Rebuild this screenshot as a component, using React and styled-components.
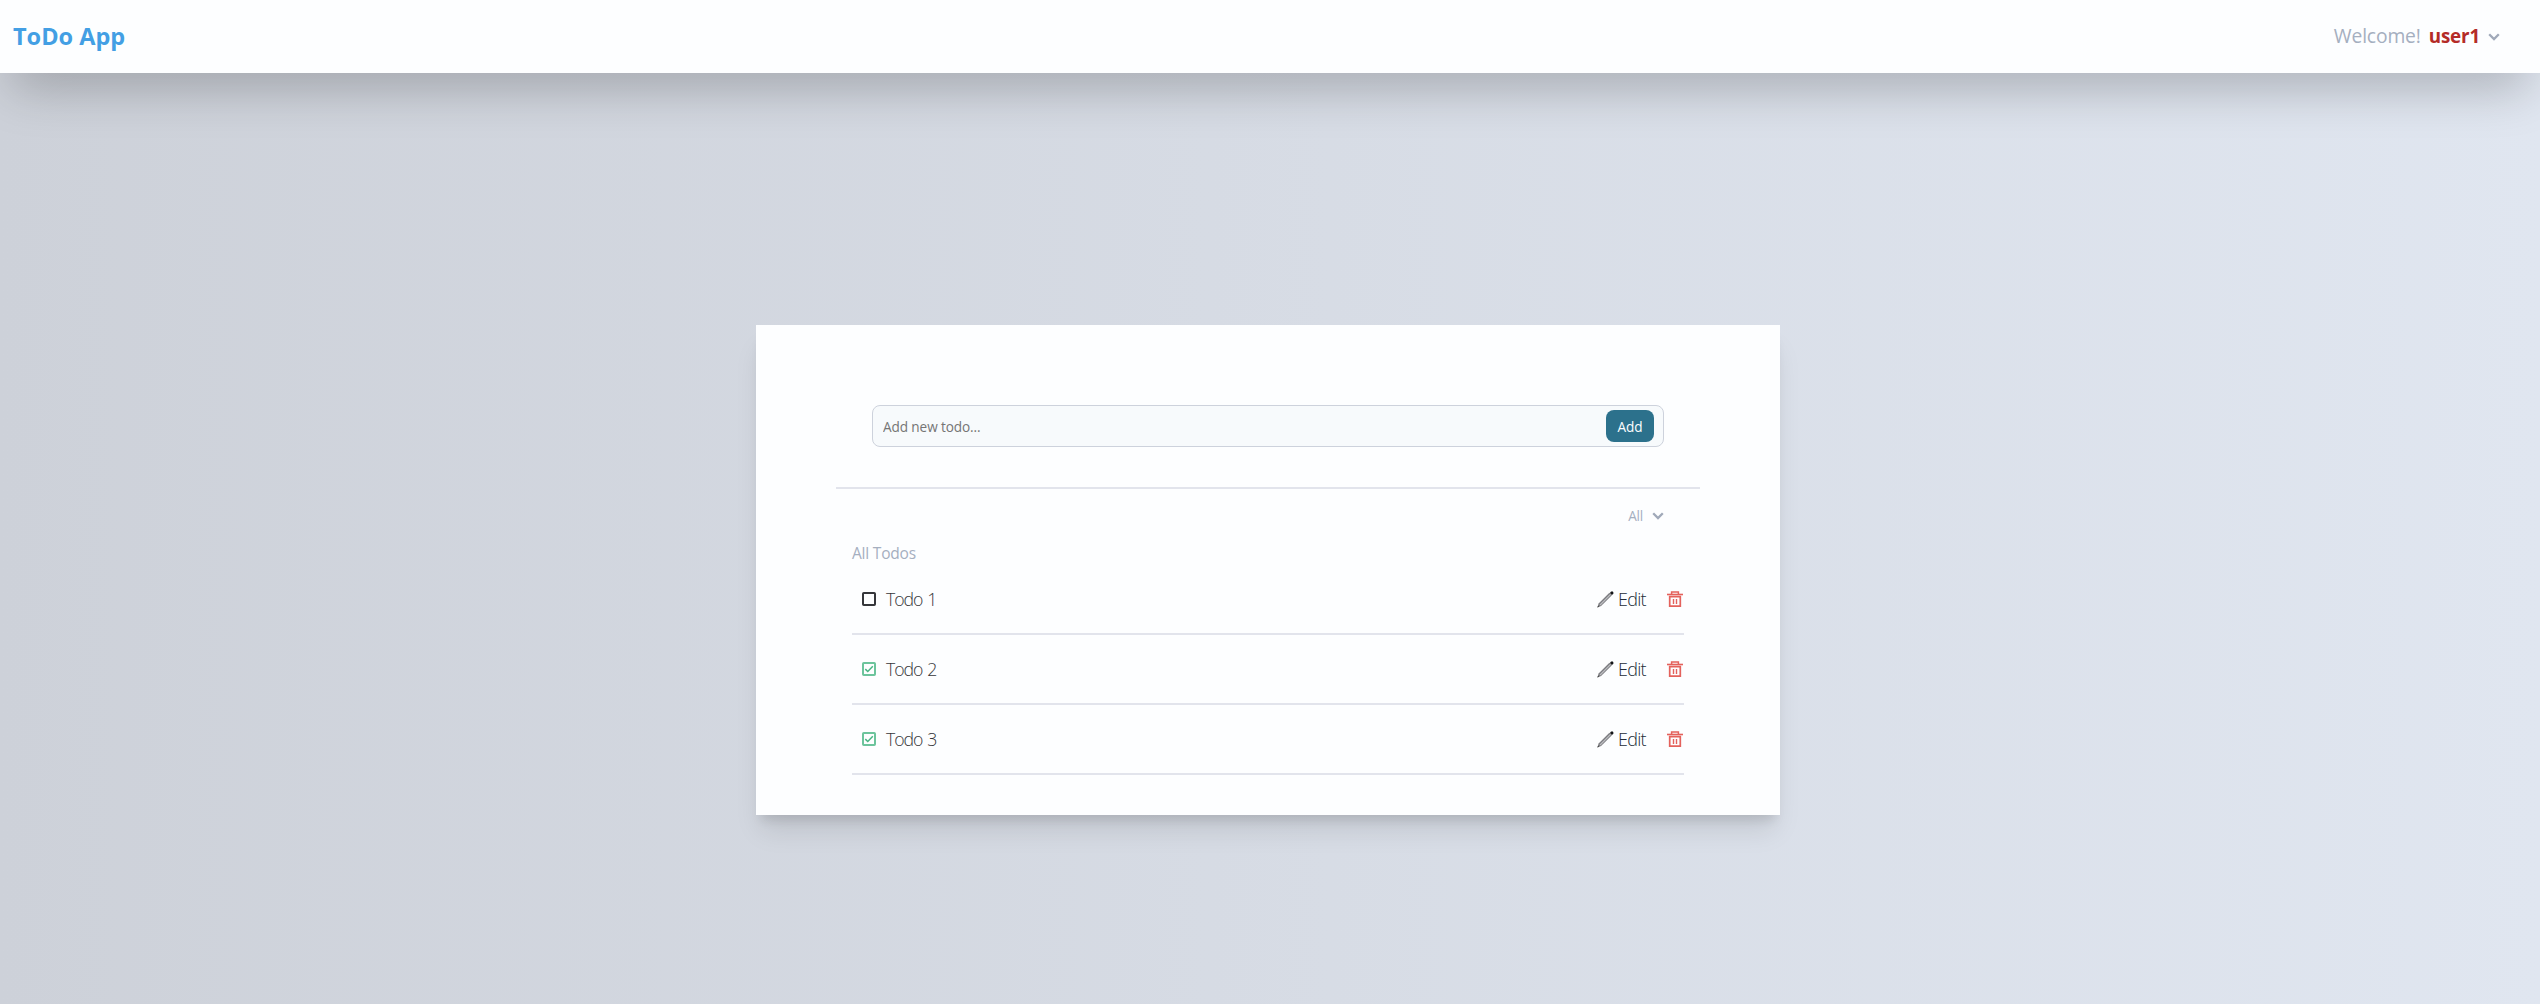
import React from "react";
import styled, { createGlobalStyle } from "styled-components";

const Global = createGlobalStyle`
  *, *::before, *::after { box-sizing: border-box; }
  body {
    margin: 0;
    font-family: "Segoe UI", "Open Sans", "Noto Sans", sans-serif;
    line-height: 1.5;
  }
  button, input { font-family: inherit; }
`;

const Page = styled.div`
  min-height: 100vh;
  display: flex;
  flex-direction: column;
  background: linear-gradient(to right, #cdd1d9, #e0e6f0);
`;

const Header = styled.header`
  height: 73px;
  display: flex;
  align-items: center;
  justify-content: space-between;
  padding: 0 40px 0 13px;
  background: #fdfeff;
  box-shadow: 0 25px 50px -12px rgba(0, 0, 0, 0.25);
`;

const Text = styled.span`
  display: inline-block;
  white-space: nowrap;
  font-size: ${(p) => p.$size}px;
  font-weight: ${(p) => p.$weight || 400};
  color: ${(p) => p.$color};
  letter-spacing: ${(p) => p.$track || 0}px;
  word-spacing: ${(p) => p.$word || 0}px;
`;

const UserMenu = styled.div`
  display: flex;
  align-items: center;
  gap: 8px;
`;

const Main = styled.main`
  flex: 1;
  display: flex;
  justify-content: center;
  align-items: flex-start;
  padding: 252px 4px 0 0;
`;

const Card = styled.section`
  width: 1024px;
  height: 490px;
  padding: 80px 80px 0;
  background: #fdfeff;
  box-shadow: 0 20px 25px -5px rgba(0, 0, 0, 0.1), 0 10px 10px -5px rgba(0, 0, 0, 0.1);
`;

const AddForm = styled.form`
  height: 42px;
  margin: 0 36px 40px;
  padding: 0 9px 0 10px;
  display: flex;
  align-items: center;
  border: 1px solid #cdd2dc;
  border-radius: 8px;
  background: #f7fafc;
`;

const AddInput = styled.input`
  flex: 1;
  padding: 0;
  border: 0;
  outline: 0;
  background: transparent;
  font-size: 13.6px;
  letter-spacing: -0.1px;
  &::placeholder { color: #757575; opacity: 1; }
`;

const AddButton = styled.button`
  width: 48px;
  height: 32px;
  padding: 0;
  border: 0;
  border-radius: 8px;
  background: #2c718c;
  color: #fdfeff;
  font-size: 13.6px;
`;

const Divider = styled.hr`
  height: 2px;
  margin: 0;
  border: 0;
  background: #e2e4ec;
`;

const Filter = styled.div`
  height: 54px;
  padding: 0 36px;
  display: flex;
  justify-content: flex-end;
  align-items: center;
  gap: 9px;
`;

const List = styled.div`
  padding: 0 16px;
`;

const ListTitle = styled.div`
  height: 22px;
  display: flex;
  align-items: center;
`;

const Row = styled.div`
  height: 70px;
  padding: 22px 1px 0 10px;
  display: flex;
  align-items: flex-start;
  border-bottom: 2px solid #e2e4ec;
`;

const RowLabel = styled.div`
  height: 24px;
  flex: 1;
  display: flex;
  align-items: center;
  gap: 10px;
`;

const Actions = styled.div`
  height: 24px;
  display: flex;
  align-items: center;
`;

const EditLink = styled.div`
  display: flex;
  align-items: center;
  gap: 4px;
  width: 70px;
`;

const Icon = styled.svg`
  display: block;
  flex: none;
`;

const Chevron = () => (
  <Icon width="12" height="8" viewBox="0 0 12 8" fill="none" stroke="#a0a9b9" strokeWidth="2.3">
    <path d="M1.2 1.3 6 6.1l4.8-4.8" />
  </Icon>
);

const Checkbox = ({ done }) => (
  <Icon width="14" height="14" viewBox="0 0 14 14" fill="none">
    <rect x="1" y="1" width="12" height="12" rx="0.8" stroke={done ? "#6cc49c" : "#35363a"} strokeWidth="2" />
    {done && <path d="M3.3 7.1 5.8 9.5l5-5.2" stroke="#48b583" strokeWidth="1.5" />}
  </Icon>
);

const Pencil = () => (
  <Icon width="17" height="17" viewBox="0 0 17 17">
    <path d="M0.4 16.4 1.6 12.6 12.4 1.8l2.5 2.5L4.1 15.1z" fill="#7d7e82" />
    <path d="M3 14 13.6 3.4" stroke="#bdbec1" strokeWidth="1.2" />
    <path d="m12.9 2 1.2-1.4h1.7l.6.8v1.4L14.9 4z" fill="#141518" />
    <path d="m.3 16.6.8-2 1.2 1.2z" fill="#444" />
  </Icon>
);

const Trash = () => (
  <Icon width="16" height="16" viewBox="0 0 16 16" fill="none" stroke="#e4625c">
    <path d="M0 3.5h16" strokeWidth="1.6" />
    <path d="M4.6 3V.9h6.8V3" strokeWidth="1.5" />
    <path d="M2.7 5.7h10.6v9.5H2.7z" strokeWidth="1.7" />
    <path d="M6.5 8v5M9.5 8v5" strokeWidth="1.4" />
  </Icon>
);

const todos = [
  { title: "Todo 1", done: false },
  { title: "Todo 2", done: true },
  { title: "Todo 3", done: true },
];

export default function App() {
  return (
    <Page>
      <Global />
      <Header>
        <Text $size={23.5} $weight={700} $color="#439fe4">ToDo App</Text>
        <UserMenu>
          <Text $size={19.3} $color="#a5afbf" $track={-0.15}>Welcome!</Text>
          <Text $size={18.8} $weight={700} $color="#b42b27" $track={-0.15}>user1</Text>
          <Chevron />
        </UserMenu>
      </Header>
      <Main>
        <Card>
          <AddForm>
            <AddInput placeholder="Add new todo..." />
            <AddButton type="button">Add</AddButton>
          </AddForm>
          <Divider />
          <Filter>
            <Text $size={13.6} $color="#a5afbf" $track={-0.2}>All</Text>
            <Chevron />
          </Filter>
          <List>
            <ListTitle>
              <Text $size={15.5} $color="#a5afbf" $track={-0.2}>All Todos</Text>
            </ListTitle>
            {todos.map((t) => (
              <Row key={t.title}>
                <RowLabel>
                  <Checkbox done={t.done} />
                  <Text $size={17.7} $weight={300} $color="#35363a" $track={-1.1} $word={1.6}>{t.title}</Text>
                </RowLabel>
                <Actions>
                  <EditLink>
                    <Pencil />
                    <Text $size={18} $weight={300} $color="#222b38" $track={-0.75}>Edit</Text>
                  </EditLink>
                  <Trash />
                </Actions>
              </Row>
            ))}
          </List>
        </Card>
      </Main>
    </Page>
  );
}
